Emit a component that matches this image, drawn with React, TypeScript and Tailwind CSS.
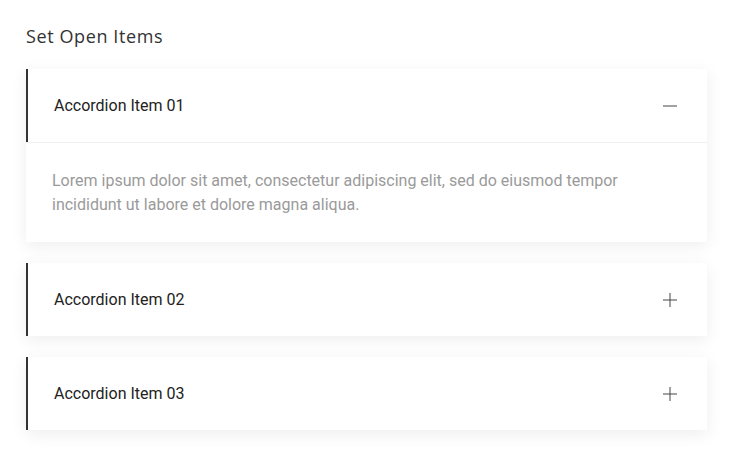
import { useState } from "react";

const items = [
  {
    title: "Accordion Item 01",
    body: "Lorem ipsum dolor sit amet, consectetur adipiscing elit, sed do eiusmod tempor incididunt ut labore et dolore magna aliqua.",
  },
  {
    title: "Accordion Item 02",
    body: "Lorem ipsum dolor sit amet, consectetur adipiscing elit, sed do eiusmod tempor incididunt ut labore et dolore magna aliqua.",
  },
  {
    title: "Accordion Item 03",
    body: "Lorem ipsum dolor sit amet, consectetur adipiscing elit, sed do eiusmod tempor incididunt ut labore et dolore magna aliqua.",
  },
];

const ToggleIcon = ({ open }: { open: boolean }) => (
  <svg width="16" height="16" viewBox="0 0 16 16" className="text-[#444]">
    <path d="M1 8h14" stroke="currentColor" strokeWidth="1" />
    {!open && <path d="M8 1v14" stroke="currentColor" strokeWidth="1" />}
  </svg>
);

const App = () => {
  const [open, setOpen] = useState<number[]>([0]);

  const toggle = (i: number) =>
    setOpen((prev) => (prev.includes(i) ? prev.filter((x) => x !== i) : [...prev, i]));

  return (
    <div className="min-h-screen bg-white px-[26px] pt-[24px] font-['Roboto',sans-serif]">
      <h2 className="text-[18px] leading-[24px] tracking-[0.6px] text-[#333] font-['Open_Sans',sans-serif]">
        Set Open Items
      </h2>

      <div className="mt-[21px] flex w-[681px] flex-col gap-[21px]">
        {items.map((item, i) => {
          const isOpen = open.includes(i);
          return (
            <div key={item.title} className="bg-white shadow-[0_4px_16px_rgba(0,0,0,0.07)]">
              <button
                onClick={() => toggle(i)}
                className="flex h-[73px] w-full items-center justify-between border-l-2 border-[#333] pl-[26px] pr-[29px] text-left"
              >
                <span className="text-[16px] text-[#222]">{item.title}</span>
                <ToggleIcon open={isOpen} />
              </button>
              {isOpen && (
                <div className="border-t border-[#f0f0f0] px-[26px] pt-[26px] pb-[25px]">
                  <p className="text-[16px] leading-[24px] text-[#9a9a9a]">{item.body}</p>
                </div>
              )}
            </div>
          );
        })}
      </div>
    </div>
  );
};

export default App;
